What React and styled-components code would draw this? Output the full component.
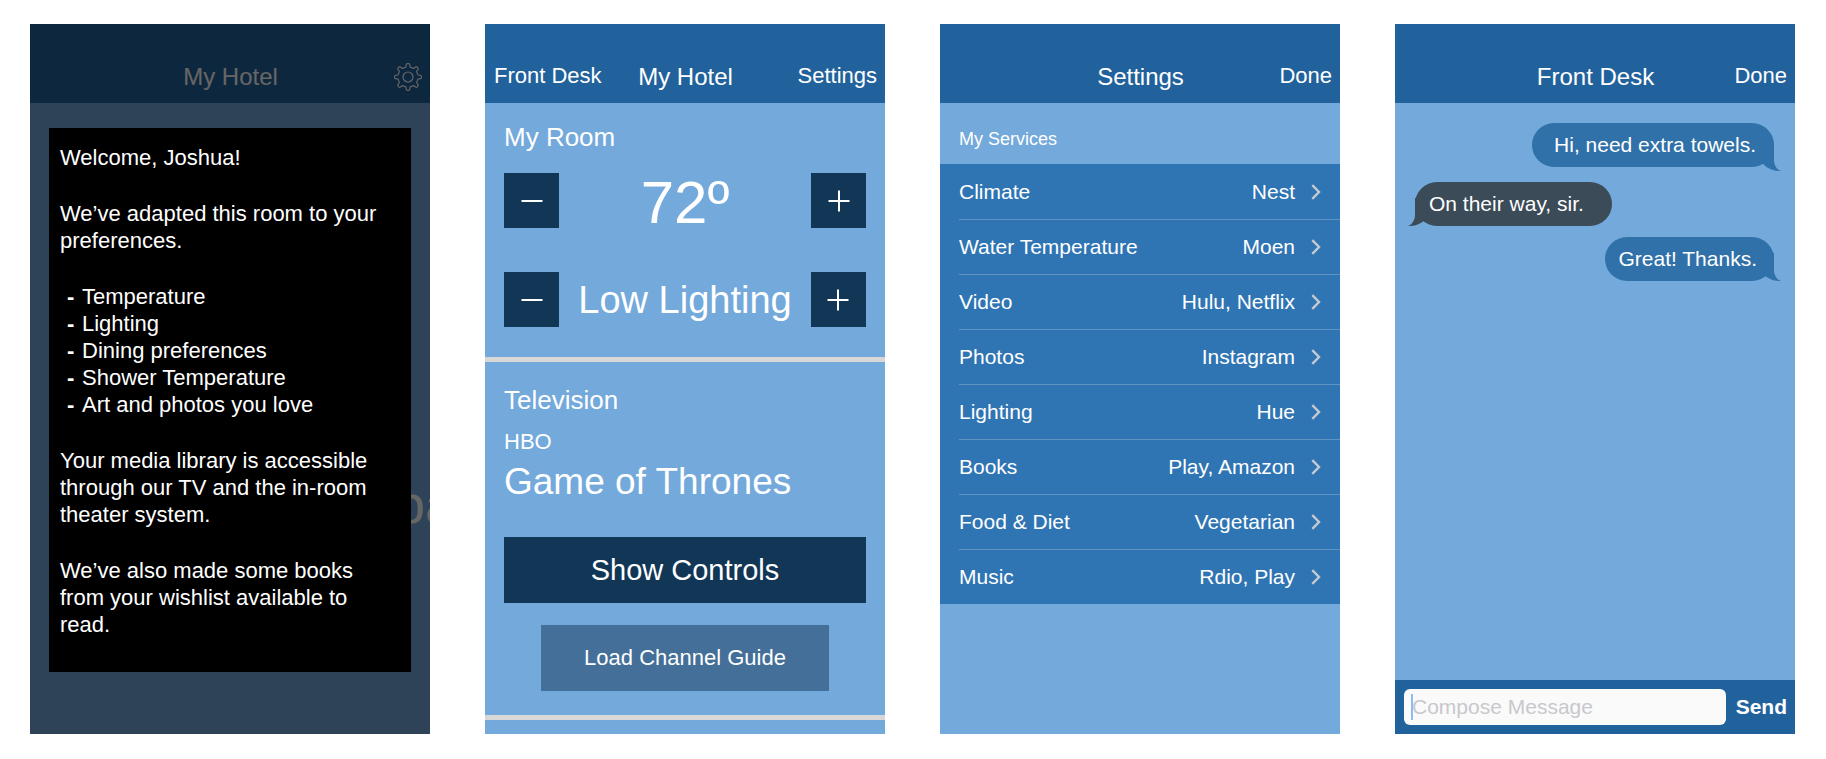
import React from "react";
import styled, { createGlobalStyle, css } from "styled-components";

const color = {
  bar: "#21629c",
  screen: "#73a9db",
  navy: "#123656",
  slate: "#436f98",
  row: "#2f75b3",
  rule: "#d8d8d8",
  sent: "#3071a9",
  received: "#3b4b57",
};

const GlobalStyle = createGlobalStyle`
  * { box-sizing: border-box; }
  body {
    margin: 0;
    background: #fff;
    font-family: "Liberation Sans", Arial, sans-serif;
    -webkit-font-smoothing: antialiased;
  }
  h1, h2, p, ul { margin: 0; padding: 0; font-weight: 400; }
  ul { list-style: none; }
  button, input { font-family: inherit; border: 0; margin: 0; }
  button { cursor: pointer; }
`;

const Board = styled.main`
  display: grid;
  grid-template-columns: repeat(4, minmax(0, 1fr));
  gap: 55px;
  min-height: 100vh;
  padding: 24px 31px 25px 30px;
`;

const Screen = styled.section`
  position: relative;
  display: flex;
  flex-direction: column;
  overflow: hidden;
  background: ${color.screen};
  color: #fff;
`;

const Header = styled.header`
  display: grid;
  grid-template-columns: 1fr auto 1fr;
  align-items: start;
  padding: 39px 8px 12px 9px;
  background: ${color.bar};
`;

const Title = styled.h1`
  grid-column: 2;
  font-size: 24px;
  line-height: 28px;
`;

const BarButton = styled.button`
  grid-column: ${(p) => (p.$side === "left" ? 1 : 3)};
  grid-row: 1;
  justify-self: ${(p) => (p.$side === "left" ? "start" : "end")};
  padding: 0;
  background: none;
  color: inherit;
  font-size: 22px;
  line-height: 26px;
  white-space: nowrap;

  svg { display: block; }
`;

/* Welcome screen */

const Backdrop = styled.div`
  position: absolute;
  inset: 0;
  padding: 104px 19px 0;
  background: rgba(0, 0, 0, 0.6);
`;

const Dialog = styled.div`
  padding: 16px 30px 34px 11px;
  background: #000;
  font-size: 22px;
  line-height: 27px;

  > * + * { margin-top: 29px; }
`;

const DashItem = styled.li`
  display: flex;
  padding-left: 7px;
`;

const Dash = styled.b`
  flex: 0 0 15px;
`;

const Feature = styled.div`
  flex: 1;
  display: flex;
  align-items: center;
  justify-content: flex-end;
  margin-right: -25px;
  padding-top: 171px;
  font-size: 54px;
  line-height: 60px;
`;

/* Room controls */

const Block = styled.div`
  display: flex;
  flex-direction: column;
  padding: ${(p) => p.$top}px 19px ${(p) => p.$bottom}px;
  border-bottom: 5px solid ${color.rule};
`;

const Heading = styled.h2`
  font-size: 26px;
  line-height: 30px;
`;

const Steppers = styled.div`
  display: grid;
  gap: 44px;
  margin-top: 21px;
`;

const Stepper = styled.div`
  display: flex;
  align-items: center;
  justify-content: space-between;
  height: 55px;
`;

const StepButton = styled.button`
  display: grid;
  place-items: center;
  width: 55px;
  height: 55px;
  padding: 0;
  background: ${color.navy};
  color: #fff;
`;

const Reading = styled.output`
  font-size: 38px;
  line-height: 44px;
  white-space: nowrap;
  ${(p) =>
    p.$large &&
    css`
      align-self: flex-end;
      font-size: 60px;
      line-height: 50px;
    `}
`;

const Channel = styled.p`
  margin-top: 14px;
  font-size: 22px;
  line-height: 26px;
`;

const Show = styled.p`
  margin-top: 6px;
  font-size: 37px;
  line-height: 42px;
`;

const Actions = styled.div`
  display: grid;
  justify-items: center;
  gap: 22px;
  margin-top: 34px;
`;

const Action = styled.button`
  width: ${(p) => (p.$secondary ? "calc(100% - 74px)" : "100%")};
  height: 66px;
  padding: 0;
  background: ${(p) => (p.$secondary ? color.slate : color.navy)};
  color: #fff;
  font-size: ${(p) => (p.$secondary ? 22 : 29)}px;
`;

/* Settings */

const GroupLabel = styled.h2`
  padding: 25px 19px 14px;
  font-size: 18px;
  line-height: 22px;
`;

const ServiceList = styled.ul`
  padding-left: 19px;
  background: ${color.row};
`;

const Service = styled.li`
  & + & { border-top: 1px solid #5f93c2; }
  &:first-child button { height: 55px; }
`;

const ServiceButton = styled.button`
  display: flex;
  align-items: center;
  width: 100%;
  height: 54px;
  padding: 0 19px 0 0;
  background: none;
  color: inherit;
  font-size: 21px;
  text-align: left;

  svg { margin-left: 16px; }
`;

const ServiceName = styled.span`
  flex: 1;
`;

/* Front desk */

const Thread = styled.div`
  flex: 1;
  display: flex;
  flex-direction: column;
  gap: 11px;
  padding: 20px 21px 20px 20px;
`;

const Bubble = styled.p`
  position: relative;
  align-self: ${(p) => (p.$received ? "flex-start" : "flex-end")};
  margin-bottom: ${(p) => (p.$hanging ? 4 : 0)}px;
  padding: ${(p) => p.$pad};
  border-radius: 22px;
  background: ${(p) => (p.$received ? color.received : color.sent)};
  font-size: 21px;
  line-height: 44px;
`;

const Tail = styled.svg`
  position: absolute;
  bottom: ${(p) => (p.$hanging ? -4 : 0)}px;
  ${(p) =>
    p.$received
      ? css`left: -7px; transform: scaleX(-1);`
      : css`right: -7px;`}
  fill: ${(p) => (p.$received ? color.received : color.sent)};
`;

const Composer = styled.form`
  display: flex;
  align-items: center;
  gap: 10px;
  padding: 9px 8px 9px 9px;
  background: ${color.bar};
`;

const Field = styled.label`
  position: relative;
  display: flex;
  flex: 1;
  min-width: 0;
`;

const Caret = styled.span`
  position: absolute;
  left: 7px;
  top: 5px;
  bottom: 5px;
  width: 2px;
  background: #8fbbf0;
`;

const MessageInput = styled.input`
  width: 100%;
  height: 36px;
  padding: 0 8px;
  border-radius: 6px;
  background: #fafafa;
  color: #222;
  font-size: 21px;
  outline: none;

  &::placeholder { color: #c8c8cd; opacity: 1; }
`;

const SendButton = styled.button`
  padding: 0;
  background: none;
  color: #fff;
  font-size: 21px;
  font-weight: 700;
`;

/* Eight narrow rounded teeth around a ring */
const gearPath = (() => {
  const points = [];
  for (let deg = 0; deg < 360; deg += 2) {
    const t = (deg * Math.PI) / 180;
    const r = 11.8 + 1.8 * Math.tanh(2.6 * (Math.cos(8 * t) - 0.3));
    points.push(`${(14 + r * Math.cos(t)).toFixed(2)} ${(14 + r * Math.sin(t)).toFixed(2)}`);
  }
  return `M${points.join("L")}Z`;
})();

const GearIcon = () => (
  <svg width="28" height="28" viewBox="0 0 28 28" fill="none" stroke="currentColor" strokeWidth="1.2" strokeLinejoin="round" aria-hidden="true">
    <path d={gearPath} />
    <circle cx="14" cy="14" r="5" />
  </svg>
);

const StepIcon = ({ plus }) => (
  <svg width="22" height="22" viewBox="0 0 22 22" stroke="currentColor" strokeWidth="2" aria-hidden="true">
    <path d={plus ? "M0.5 11H21.5M11 0.5V21.5" : "M0.5 11H21.5"} />
  </svg>
);

const Chevron = () => (
  <svg width="10" height="16" viewBox="0 0 10 16" fill="none" stroke="#c5cad0" strokeWidth="2.4" aria-hidden="true">
    <path d="M1.3 1.2L8 8L1.3 14.8" />
  </svg>
);

const preferences = [
  "Temperature",
  "Lighting",
  "Dining preferences",
  "Shower Temperature",
  "Art and photos you love",
];

const services = [
  ["Climate", "Nest"],
  ["Water Temperature", "Moen"],
  ["Video", "Hulu, Netflix"],
  ["Photos", "Instagram"],
  ["Lighting", "Hue"],
  ["Books", "Play, Amazon"],
  ["Food & Diet", "Vegetarian"],
  ["Music", "Rdio, Play"],
];

const messages = [
  { text: "Hi, need extra towels.", pad: "0 18px 0 22px", hanging: true },
  { text: "On their way, sir.", pad: "0 28px 0 14px", received: true },
  { text: "Great! Thanks.", pad: "0 17px 0 13px" },
];

function WelcomeScreen() {
  return (
    <Screen>
      <Header>
        <Title>My Hotel</Title>
        <BarButton aria-label="Settings"><GearIcon /></BarButton>
      </Header>
      <Feature>pa</Feature>
      <Backdrop>
        <Dialog role="dialog" aria-label="Welcome">
          <p>Welcome, Joshua!</p>
          <p>We’ve adapted this room to your preferences.</p>
          <ul>
            {preferences.map((name) => (
              <DashItem key={name}>
                <Dash>-</Dash>
                <span>{name}</span>
              </DashItem>
            ))}
          </ul>
          <p>Your media library is accessible through our TV and the in-room theater system.</p>
          <p>We’ve also made some books from your wishlist available to read.</p>
        </Dialog>
      </Backdrop>
    </Screen>
  );
}

function StepperRow({ name, value, large }) {
  return (
    <Stepper>
      <StepButton aria-label={`Decrease ${name}`}><StepIcon /></StepButton>
      <Reading $large={large}>{value}</Reading>
      <StepButton aria-label={`Increase ${name}`}><StepIcon plus /></StepButton>
    </Stepper>
  );
}

function RoomScreen() {
  return (
    <Screen>
      <Header>
        <BarButton $side="left">Front Desk</BarButton>
        <Title>My Hotel</Title>
        <BarButton>Settings</BarButton>
      </Header>
      <Block $top={19} $bottom={30}>
        <Heading>My Room</Heading>
        <Steppers>
          <StepperRow name="temperature" value="72º" large />
          <StepperRow name="lighting" value="Low Lighting" />
        </Steppers>
      </Block>
      <Block $top={23} $bottom={24}>
        <Heading>Television</Heading>
        <Channel>HBO</Channel>
        <Show>Game of Thrones</Show>
        <Actions>
          <Action>Show Controls</Action>
          <Action $secondary>Load Channel Guide</Action>
        </Actions>
      </Block>
    </Screen>
  );
}

function SettingsScreen() {
  return (
    <Screen>
      <Header>
        <Title>Settings</Title>
        <BarButton>Done</BarButton>
      </Header>
      <GroupLabel>My Services</GroupLabel>
      <ServiceList>
        {services.map(([name, value]) => (
          <Service key={name}>
            <ServiceButton>
              <ServiceName>{name}</ServiceName>
              <span>{value}</span>
              <Chevron />
            </ServiceButton>
          </Service>
        ))}
      </ServiceList>
    </Screen>
  );
}

function FrontDeskScreen() {
  return (
    <Screen>
      <Header>
        <Title>Front Desk</Title>
        <BarButton>Done</BarButton>
      </Header>
      <Thread>
        {messages.map((m) => (
          <Bubble key={m.text} $received={m.received} $hanging={m.hanging} $pad={m.pad}>
            {m.text}
            <Tail $received={m.received} $hanging={m.hanging} width="20" height="28" viewBox="0 0 20 28" aria-hidden="true">
              <path d="M13 0V18C13.500 23 16.500 27 20 28C13 28.300 7 26 2 21V0Z" />
            </Tail>
          </Bubble>
        ))}
      </Thread>
      <Composer onSubmit={(e) => e.preventDefault()}>
        <Field>
          <MessageInput aria-label="Compose Message" placeholder="Compose Message" />
          <Caret />
        </Field>
        <SendButton type="submit">Send</SendButton>
      </Composer>
    </Screen>
  );
}

export default function App() {
  return (
    <>
      <GlobalStyle />
      <Board>
        <WelcomeScreen />
        <RoomScreen />
        <SettingsScreen />
        <FrontDeskScreen />
      </Board>
    </>
  );
}
